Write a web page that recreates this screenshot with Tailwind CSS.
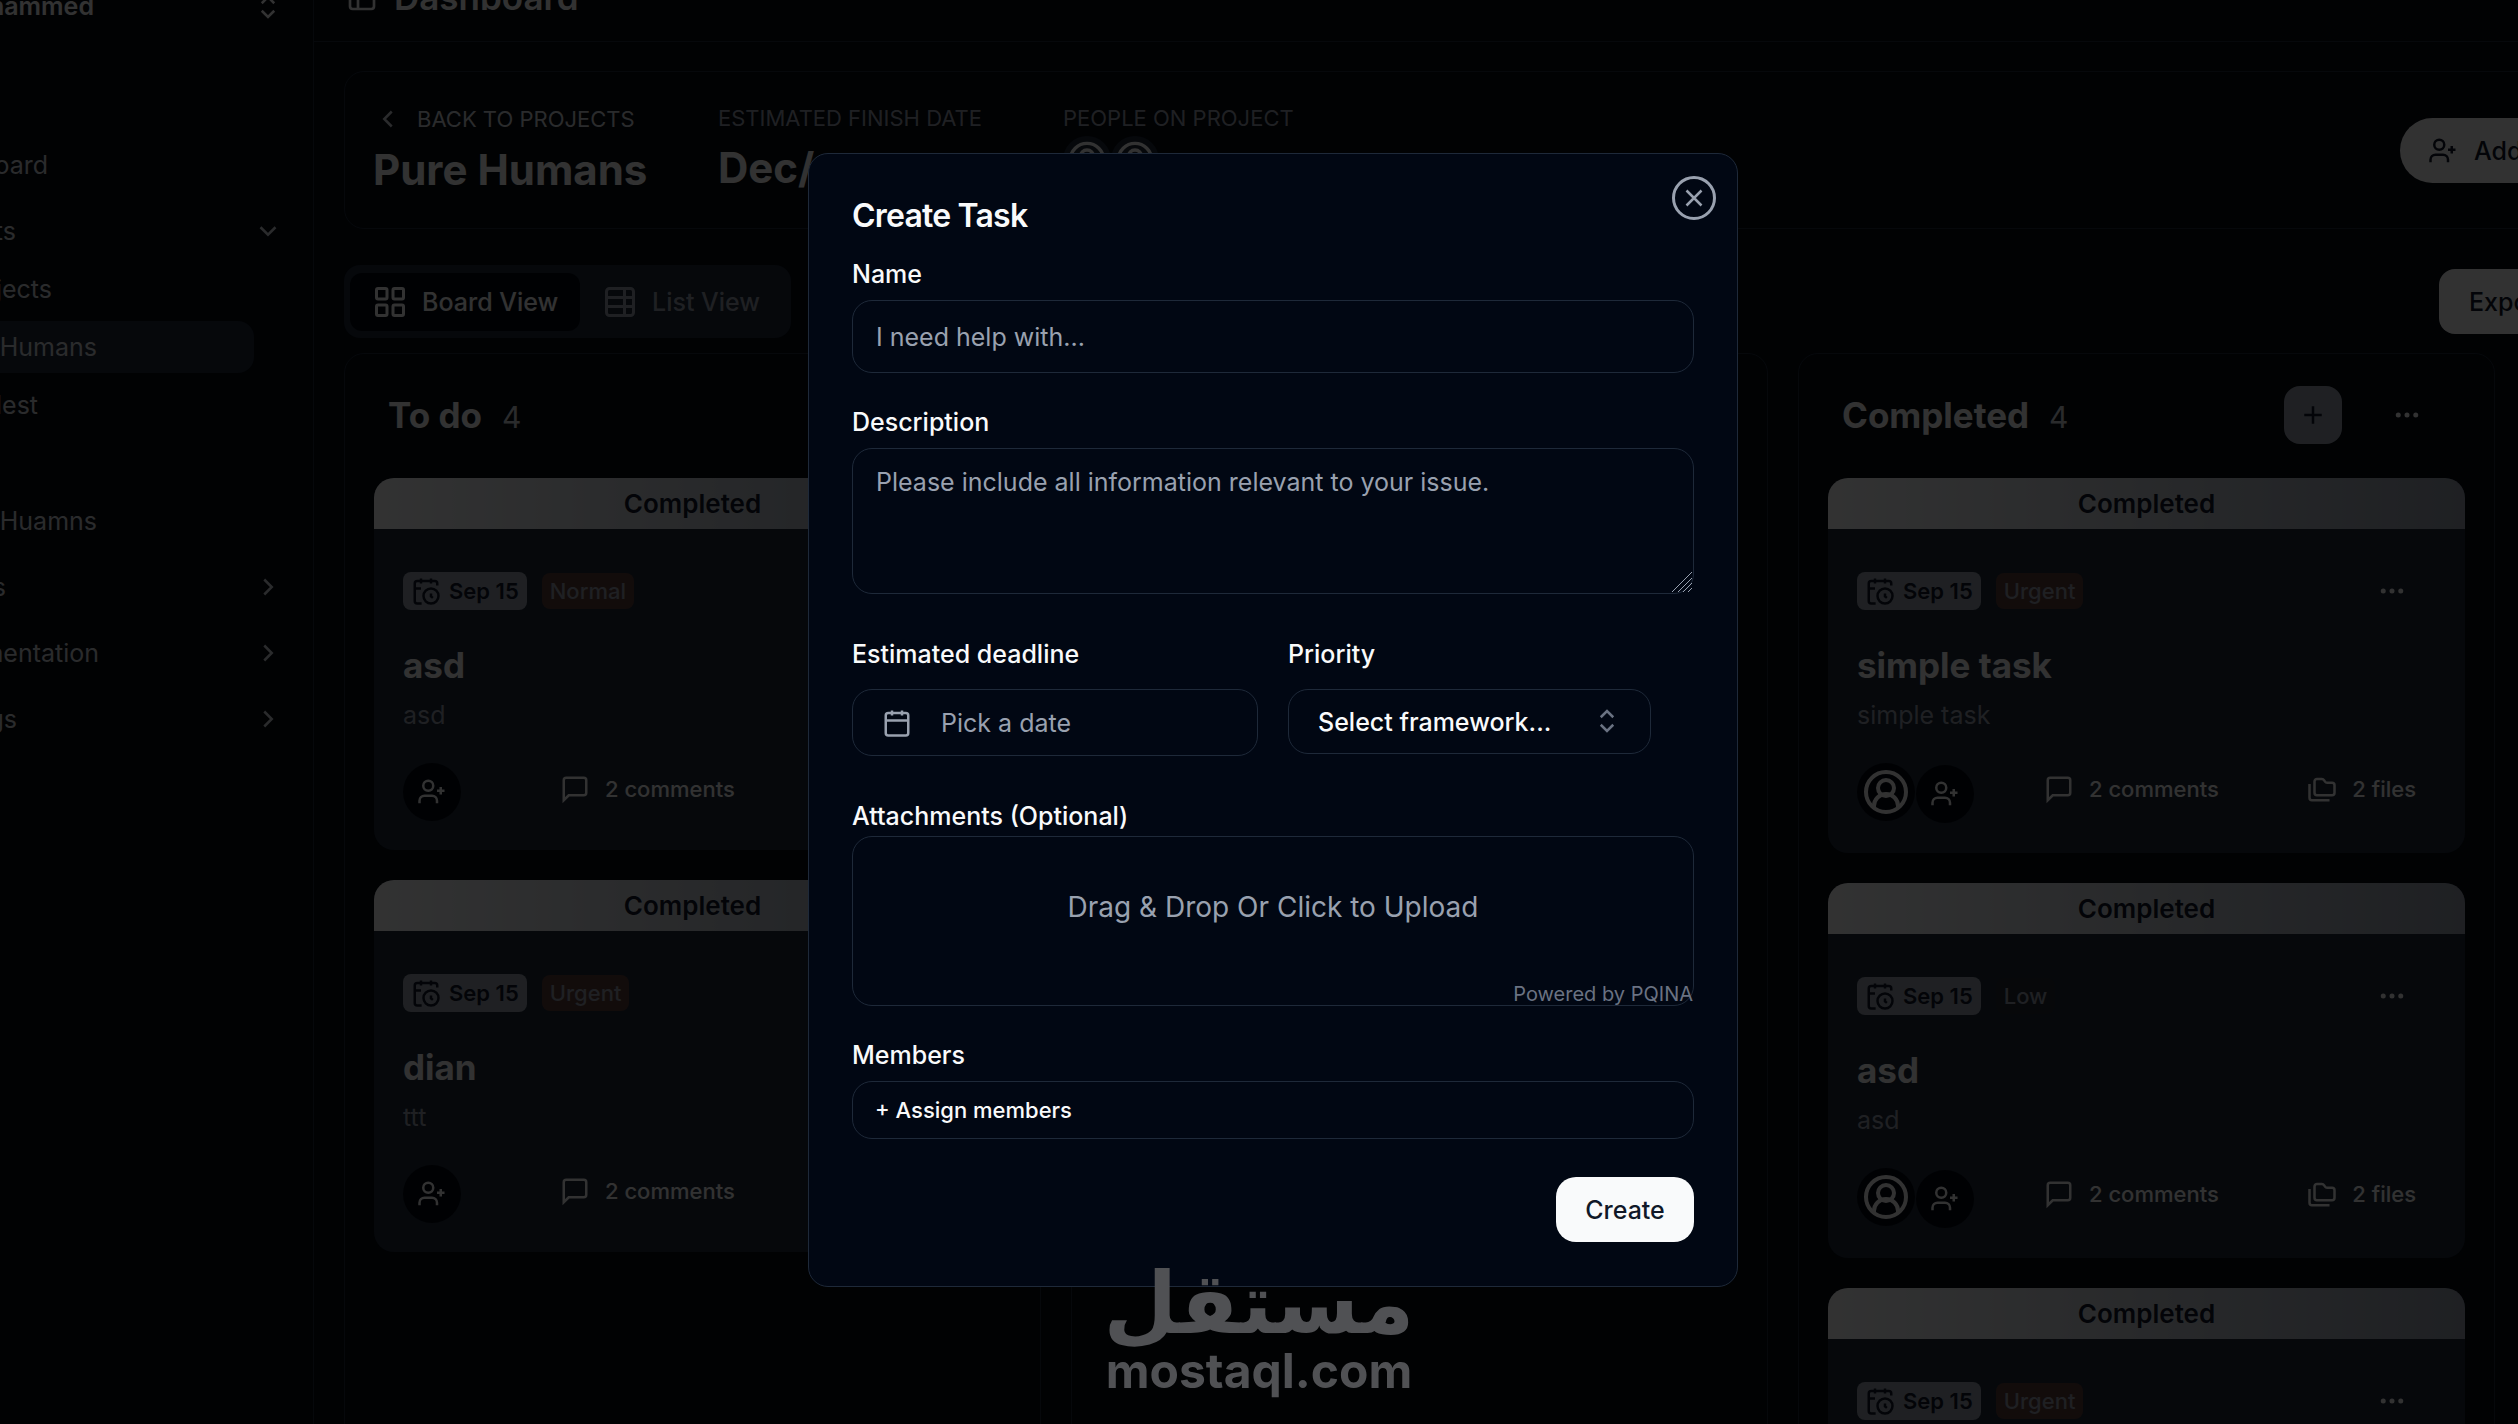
<!DOCTYPE html>
<html lang="en">

<head>
    <meta charset="UTF-8">
    <meta name="viewport" content="width=device-width, initial-scale=1.0">
    <title>Pure Humans - Dashboard</title>
    <script src="https://cdn.jsdelivr.net/npm/@tailwindcss/browser@4"></script>
</head>

<body class="h-screen overflow-hidden bg-[#050a12] font-[Inter,sans-serif] text-[25px] leading-8 text-gray-50">
    <!-- Icon sprite -->
    <svg class="hidden" xmlns="http://www.w3.org/2000/svg">
        <symbol id="user-plus" viewBox="0 0 24 24"><path d="M16 21v-2a4 4 0 0 0-4-4H6a4 4 0 0 0-4 4v2" /><circle cx="9" cy="7" r="4" /><path d="M19 8v6M22 11h-6" /></symbol>
        <symbol id="user" viewBox="0 0 24 24"><circle cx="12" cy="12" r="10" /><circle cx="12" cy="10" r="4" /><path d="M6 20v-1a6 6 0 0 1 12 0v1" /></symbol>
        <symbol id="message" viewBox="0 0 24 24"><path d="M21 15a2 2 0 0 1-2 2H7l-4 4V5a2 2 0 0 1 2-2h14a2 2 0 0 1 2 2z" /></symbol>
        <symbol id="folders" viewBox="0 0 24 24"><path d="M20 17a2 2 0 0 0 2-2V9a2 2 0 0 0-2-2h-3.900a2 2 0 0 1-1.690-.9l-.81-1.200a2 2 0 0 0-1.670-.9H8a2 2 0 0 0-2 2v9a2 2 0 0 0 2 2Z" /><path d="M2 8v11a2 2 0 0 0 2 2h14" /></symbol>
        <symbol id="calendar-clock" viewBox="0 0 24 24"><path d="M21 7.500V6a2 2 0 0 0-2-2H5a2 2 0 0 0-2 2v14a2 2 0 0 0 2 2h3.500M16 2v4M8 2v4M3 10h5M17.500 17.500 16 16.300V14" /><circle cx="16" cy="16" r="6" /></symbol>
        <symbol id="calendar" viewBox="0 0 24 24"><rect x="3" y="4" width="18" height="18" rx="2" /><path d="M16 2v4M8 2v4M3 10h18" /></symbol>
        <symbol id="dots" viewBox="0 0 24 24"><circle cx="5" cy="12" r="1" /><circle cx="12" cy="12" r="1" /><circle cx="19" cy="12" r="1" /></symbol>
        <symbol id="chevron-right" viewBox="0 0 24 24"><path d="m9 18 6-6-6-6" /></symbol>
        <symbol id="chevron-left" viewBox="0 0 24 24"><path d="m15 18-6-6 6-6" /></symbol>
        <symbol id="chevron-down" viewBox="0 0 24 24"><path d="m6 9 6 6 6-6" /></symbol>
        <symbol id="chevrons" viewBox="0 0 24 24"><path d="m7 15 5 5 5-5M7 9l5-5 5 5" /></symbol>
        <symbol id="grid" viewBox="0 0 24 24"><rect x="3" y="3" width="7" height="7" rx="1" /><rect x="14" y="3" width="7" height="7" rx="1" /><rect x="14" y="14" width="7" height="7" rx="1" /><rect x="3" y="14" width="7" height="7" rx="1" /></symbol>
        <symbol id="table" viewBox="0 0 24 24"><rect x="3" y="3" width="18" height="18" rx="2" /><path d="M15 3v18M3 9h18M3 15h18" /></symbol>
        <symbol id="layout" viewBox="0 0 24 24"><rect x="3" y="3" width="18" height="18" rx="2" /><path d="M3 9h18M9 9v12" /></symbol>
        <symbol id="plus" viewBox="0 0 24 24"><path d="M5 12h14M12 5v14" /></symbol>
        <symbol id="x" viewBox="0 0 24 24"><path d="M18 6 6 18M6 6l12 12" /></symbol>
        <symbol id="grip" viewBox="0 0 20 20"><path d="M0 20 20 0M6 20 20 6M11 20l9-9M16 20l4-4" /></symbol>
    </svg>

    <div class="flex h-full">
        <!-- Sidebar -->
        <aside class="w-[314px] shrink-0 border-r border-gray-800">
            <div class="flex h-[22px] items-end justify-between pr-[30px]">
                <span class="flex w-[94px] justify-end font-semibold">Mohammed</span>
                <svg class="size-[30px] shrink-0 fill-none stroke-current stroke-2"><use href="#chevrons" /></svg>
            </div>
            <nav class="mt-[117px] text-gray-300">
                <a href="#" class="flex h-[52px] items-center"><span class="flex w-12 justify-end">Dashboard</span></a>
                <a href="#" class="mt-3.5 flex h-[52px] items-center justify-between pr-[30px]"><span class="flex w-4 justify-end">Projects</span><svg class="size-[30px] fill-none stroke-current stroke-2"><use href="#chevron-down" /></svg></a>
                <a href="#" class="mt-1.5 flex h-[52px] items-center"><span class="flex w-[52px] justify-end">Projects</span></a>
                <a href="#" class="mt-1.5 mr-[59px] flex h-[52px] items-center rounded-r-2xl bg-gray-800"><span class="flex w-[97px] justify-end whitespace-nowrap">Pure Humans</span></a>
                <a href="#" class="mt-1.5 flex h-[52px] items-center"><span class="flex w-[38px] justify-end">dlest</span></a>
                <a href="#" class="mt-16 flex h-[52px] items-center"><span class="flex w-[97px] justify-end whitespace-nowrap">Pure Huamns</span></a>
                <a href="#" class="mt-3.5 flex h-[52px] items-center justify-between pr-[30px]"><span class="flex w-1.5 justify-end">s</span><svg class="size-[30px] fill-none stroke-current stroke-2"><use href="#chevron-right" /></svg></a>
                <a href="#" class="mt-3.5 flex h-[52px] items-center justify-between pr-[30px]"><span class="flex w-[99px] justify-end">Documentation</span><svg class="size-[30px] fill-none stroke-current stroke-2"><use href="#chevron-right" /></svg></a>
                <a href="#" class="mt-3.5 flex h-[52px] items-center justify-between pr-[30px]"><span class="flex w-[17px] justify-end">Settings</span><svg class="size-[30px] fill-none stroke-current stroke-2"><use href="#chevron-right" /></svg></a>
            </nav>
        </aside>

        <!-- Main content, wider than the viewport -->
        <main class="-mr-[200px] min-w-0 flex-1">
            <header class="flex h-[42px] items-end gap-4 border-b border-gray-800 pb-6 pl-8">
                <svg class="mb-1 size-8 shrink-0 fill-none stroke-current stroke-2"><use href="#layout" /></svg>
                <h1 class="text-[35px] leading-10 font-semibold">Dashboard</h1>
            </header>

            <div class="pl-[30px] pt-[29px]">
                <section class="flex h-[158px] items-start justify-between rounded-[20px] border border-gray-800 px-7 pt-8">
                    <div class="flex">
                        <div class="w-[345px]">
                            <a href="#" class="flex items-center gap-3.5 text-[22px] leading-7 text-gray-300"><svg class="size-[30px] fill-none stroke-current stroke-2"><use href="#chevron-left" /></svg>BACK TO PROJECTS</a>
                            <h2 class="mt-3 text-[42px] leading-12 font-bold">Pure Humans</h2>
                        </div>
                        <div class="w-[345px]">
                            <p class="text-[22px] leading-7 text-gray-400">ESTIMATED FINISH DATE</p>
                            <p class="mt-3 text-[42px] leading-12 font-bold">Dec/</p>
                        </div>
                        <div>
                            <p class="text-[22px] leading-7 text-gray-400">PEOPLE ON PROJECT</p>
                            <div class="mt-1 flex">
                                <span class="flex size-12 items-center justify-center rounded-full bg-gray-800"><svg class="size-10 fill-none stroke-current stroke-2"><use href="#user" /></svg></span>
                                <span class="flex size-12 items-center justify-center rounded-full bg-gray-800"><svg class="size-10 fill-none stroke-current stroke-2"><use href="#user" /></svg></span>
                            </div>
                        </div>
                    </div>
                    <button class="mt-3.5 mr-[51px] flex h-[65px] w-[238px] items-center gap-4 rounded-full bg-gray-50 px-7 font-medium text-gray-900"><svg class="size-[30px] fill-none stroke-current stroke-2"><use href="#user-plus" /></svg>Add users</button>
                </section>

                <div class="mt-9 flex items-center justify-between">
                    <div class="flex h-[73px] w-[447px] items-center rounded-2xl bg-gray-800 p-1.5 font-medium">
                        <button class="flex h-[58px] w-[230px] items-center gap-3.5 rounded-xl bg-gray-950 px-[22px] whitespace-nowrap"><svg class="size-9 shrink-0 fill-none stroke-current stroke-2"><use href="#grid" /></svg>Board View</button>
                        <button class="flex h-[58px] items-center gap-3.5 px-[22px] whitespace-nowrap text-gray-400"><svg class="size-9 shrink-0 fill-none stroke-current stroke-2"><use href="#table" /></svg>List View</button>
                    </div>
                    <button class="h-[65px] w-[279px] rounded-2xl bg-gray-50 pl-[30px] text-left font-medium text-gray-900">Export</button>
                </div>

                <!-- Board -->
                <div class="mt-[15px] flex gap-[30px]">
                    <section class="h-[1200px] w-[697px] shrink-0 rounded-[20px] border border-gray-800 px-[29px] pt-8">
                        <div class="flex h-[58px] items-center gap-5 px-3.5">
                            <h3 class="text-[35px] leading-10 font-bold">To do</h3>
                            <span class="pt-1 text-[30px] text-gray-300">4</span>
                        </div>
                        <div class="mt-[34px] flex flex-col gap-[30px]">
                            <article class="h-[372px] overflow-hidden rounded-[20px] bg-gray-800">
                                <p class="flex h-[51px] items-center justify-center bg-linear-to-r from-gray-50 to-gray-400 text-[26px] font-semibold text-gray-900">Completed</p>
                                <div class="px-[29px] pt-[43px]">
                                    <div class="flex h-[38px] items-center gap-[15px] text-[22px] leading-7">
                                        <span class="flex h-[38px] items-center gap-2 rounded-lg bg-gray-400 px-2 font-semibold text-gray-900"><svg class="size-[30px] fill-none stroke-current stroke-2"><use href="#calendar-clock" /></svg>Sep 15</span>
                                        <span class="rounded-lg bg-[#5c3d3a] px-2 py-1 font-medium text-gray-400">Normal</span>
                                    </div>
                                    <h4 class="mt-[35px] text-[35px] leading-10 font-bold">asd</h4>
                                    <p class="mt-3.5 text-gray-400">asd</p>
                                    <div class="mt-8 flex items-start">
                                        <button aria-label="Assign" class="flex size-[58px] items-center justify-center rounded-full bg-gray-950"><svg class="size-[30px] fill-none stroke-current stroke-2"><use href="#user-plus" /></svg></button>
                                        <span class="ml-[99px] mt-2.5 flex items-center gap-[15px] text-[22px] font-medium"><svg class="size-[30px] fill-none stroke-current stroke-2"><use href="#message" /></svg>2 comments</span>
                                    </div>
                                </div>
                            </article>
                            <article class="h-[372px] overflow-hidden rounded-[20px] bg-gray-800">
                                <p class="flex h-[51px] items-center justify-center bg-linear-to-r from-gray-50 to-gray-400 text-[26px] font-semibold text-gray-900">Completed</p>
                                <div class="px-[29px] pt-[43px]">
                                    <div class="flex h-[38px] items-center gap-[15px] text-[22px] leading-7">
                                        <span class="flex h-[38px] items-center gap-2 rounded-lg bg-gray-400 px-2 font-semibold text-gray-900"><svg class="size-[30px] fill-none stroke-current stroke-2"><use href="#calendar-clock" /></svg>Sep 15</span>
                                        <span class="rounded-lg bg-[#5c3d3a] px-2 py-1 font-medium text-gray-400">Urgent</span>
                                    </div>
                                    <h4 class="mt-[35px] text-[35px] leading-10 font-bold">dian</h4>
                                    <p class="mt-3.5 text-gray-400">ttt</p>
                                    <div class="mt-8 flex items-start">
                                        <button aria-label="Assign" class="flex size-[58px] items-center justify-center rounded-full bg-gray-950"><svg class="size-[30px] fill-none stroke-current stroke-2"><use href="#user-plus" /></svg></button>
                                        <span class="ml-[99px] mt-2.5 flex items-center gap-[15px] text-[22px] font-medium"><svg class="size-[30px] fill-none stroke-current stroke-2"><use href="#message" /></svg>2 comments</span>
                                    </div>
                                </div>
                            </article>
                        </div>
                    </section>

                    <section class="h-[1200px] w-[697px] shrink-0 rounded-[20px] border border-gray-800"></section>

                    <section class="h-[1200px] w-[697px] shrink-0 rounded-[20px] border border-gray-800 px-[29px] pt-8">
                        <div class="flex h-[58px] items-center gap-5 px-3.5">
                            <h3 class="text-[35px] leading-10 font-bold">Completed</h3>
                            <span class="pt-1 text-[30px] text-gray-300">4</span>
                            <button aria-label="Add task" class="ml-auto flex size-[58px] items-center justify-center rounded-2xl bg-gray-400 text-gray-900"><svg class="size-[30px] fill-none stroke-current stroke-2"><use href="#plus" /></svg></button>
                            <button aria-label="Column menu" class="ml-[30px] mr-[29px]"><svg class="size-[30px] fill-none stroke-current stroke-2"><use href="#dots" /></svg></button>
                        </div>
                        <div class="mt-[34px] flex flex-col gap-[30px]">
                            <article class="h-[375px] overflow-hidden rounded-[20px] bg-gray-800">
                                <p class="flex h-[51px] items-center justify-center bg-linear-to-r from-gray-50 to-gray-400 text-[26px] font-semibold text-gray-900">Completed</p>
                                <div class="px-[29px] pt-[43px]">
                                    <div class="flex h-[38px] items-center gap-[15px] text-[22px] leading-7">
                                        <span class="flex h-[38px] items-center gap-2 rounded-lg bg-gray-400 px-2 font-semibold text-gray-900"><svg class="size-[30px] fill-none stroke-current stroke-2"><use href="#calendar-clock" /></svg>Sep 15</span>
                                        <span class="rounded-lg bg-[#5c3d3a] px-2 py-1 font-medium text-gray-400">Urgent</span>
                                        <button aria-label="Task menu" class="ml-auto mr-[29px]"><svg class="size-[30px] fill-none stroke-current stroke-2"><use href="#dots" /></svg></button>
                                    </div>
                                    <h4 class="mt-[35px] text-[35px] leading-10 font-bold">simple task</h4>
                                    <p class="mt-3.5 text-gray-400">simple task</p>
                                    <div class="mt-8 flex items-start">
                                        <span class="flex size-[58px] items-center justify-center rounded-full bg-gray-950"><svg class="size-12 fill-none stroke-current stroke-2"><use href="#user" /></svg></span>
                                        <button aria-label="Assign" class="mt-0.5 ml-px flex size-[58px] items-center justify-center rounded-full bg-gray-950"><svg class="size-[30px] fill-none stroke-current stroke-2"><use href="#user-plus" /></svg></button>
                                        <span class="ml-[70px] mt-2.5 flex items-center gap-[15px] text-[22px] font-medium"><svg class="size-[30px] fill-none stroke-current stroke-2"><use href="#message" /></svg>2 comments</span>
                                        <span class="ml-auto mr-5 mt-2.5 flex items-center gap-[15px] text-[22px] font-medium"><svg class="size-[30px] fill-none stroke-current stroke-2"><use href="#folders" /></svg>2 files</span>
                                    </div>
                                </div>
                            </article>
                            <article class="h-[375px] overflow-hidden rounded-[20px] bg-gray-800">
                                <p class="flex h-[51px] items-center justify-center bg-linear-to-r from-gray-50 to-gray-400 text-[26px] font-semibold text-gray-900">Completed</p>
                                <div class="px-[29px] pt-[43px]">
                                    <div class="flex h-[38px] items-center gap-[15px] text-[22px] leading-7">
                                        <span class="flex h-[38px] items-center gap-2 rounded-lg bg-gray-400 px-2 font-semibold text-gray-900"><svg class="size-[30px] fill-none stroke-current stroke-2"><use href="#calendar-clock" /></svg>Sep 15</span>
                                        <span class="rounded-lg bg-[#262b35] px-2 py-1 font-medium text-gray-400">Low</span>
                                        <button aria-label="Task menu" class="ml-auto mr-[29px]"><svg class="size-[30px] fill-none stroke-current stroke-2"><use href="#dots" /></svg></button>
                                    </div>
                                    <h4 class="mt-[35px] text-[35px] leading-10 font-bold">asd</h4>
                                    <p class="mt-3.5 text-gray-400">asd</p>
                                    <div class="mt-8 flex items-start">
                                        <span class="flex size-[58px] items-center justify-center rounded-full bg-gray-950"><svg class="size-12 fill-none stroke-current stroke-2"><use href="#user" /></svg></span>
                                        <button aria-label="Assign" class="mt-0.5 ml-px flex size-[58px] items-center justify-center rounded-full bg-gray-950"><svg class="size-[30px] fill-none stroke-current stroke-2"><use href="#user-plus" /></svg></button>
                                        <span class="ml-[70px] mt-2.5 flex items-center gap-[15px] text-[22px] font-medium"><svg class="size-[30px] fill-none stroke-current stroke-2"><use href="#message" /></svg>2 comments</span>
                                        <span class="ml-auto mr-5 mt-2.5 flex items-center gap-[15px] text-[22px] font-medium"><svg class="size-[30px] fill-none stroke-current stroke-2"><use href="#folders" /></svg>2 files</span>
                                    </div>
                                </div>
                            </article>
                            <article class="h-[375px] overflow-hidden rounded-[20px] bg-gray-800">
                                <p class="flex h-[51px] items-center justify-center bg-linear-to-r from-gray-50 to-gray-400 text-[26px] font-semibold text-gray-900">Completed</p>
                                <div class="px-[29px] pt-[43px]">
                                    <div class="flex h-[38px] items-center gap-[15px] text-[22px] leading-7">
                                        <span class="flex h-[38px] items-center gap-2 rounded-lg bg-gray-400 px-2 font-semibold text-gray-900"><svg class="size-[30px] fill-none stroke-current stroke-2"><use href="#calendar-clock" /></svg>Sep 15</span>
                                        <span class="rounded-lg bg-[#5c3d3a] px-2 py-1 font-medium text-gray-400">Urgent</span>
                                        <button aria-label="Task menu" class="ml-auto mr-[29px]"><svg class="size-[30px] fill-none stroke-current stroke-2"><use href="#dots" /></svg></button>
                                    </div>
                                </div>
                            </article>
                        </div>
                    </section>
                </div>
            </div>
        </main>
    </div>

    <!-- Create task dialog -->
    <div class="fixed inset-0 flex items-start justify-center bg-black/80 pt-[153px] pl-7">
        <form role="dialog" aria-labelledby="dialog-title" class="relative w-[930px] rounded-[20px] border border-gray-800 bg-[#010713] px-[43px] pt-10 pb-11 font-medium">
            <button type="button" aria-label="Close" class="absolute top-[22px] right-[21px] flex size-[44px] items-center justify-center rounded-full border-3 border-gray-400 text-gray-400"><svg class="size-[30px] fill-none stroke-current stroke-2"><use href="#x" /></svg></button>
            <h2 id="dialog-title" class="text-[32px] leading-11 font-semibold tracking-tight">Create Task</h2>

            <label for="name" class="mt-5 block">Name</label>
            <input id="name" type="text" placeholder="I need help with..." class="mt-[10px] block h-[73px] w-full rounded-[20px] border border-gray-800 px-[23px] font-normal placeholder:text-gray-400">

            <label for="description" class="mt-[33px] block">Description</label>
            <div class="relative mt-[10px]">
                <textarea id="description" placeholder="Please include all information relevant to your issue." class="block h-[146px] w-full resize-none rounded-[20px] border border-gray-800 px-[23px] py-[17px] font-normal placeholder:text-gray-400"></textarea>
                <svg class="pointer-events-none absolute right-0.5 bottom-0.5 size-5 fill-none stroke-gray-400 stroke-1"><use href="#grip" /></svg>
            </div>

            <div class="mt-11 flex items-start gap-[30px]">
                <div class="w-[406px]">
                    <label for="deadline" class="block">Estimated deadline</label>
                    <button id="deadline" type="button" class="mt-[19px] flex h-[67px] w-full items-center gap-[29px] rounded-[20px] border border-gray-800 px-[29px] font-normal text-gray-400"><svg class="size-[30px] fill-none stroke-current stroke-2"><use href="#calendar" /></svg>Pick a date</button>
                </div>
                <div class="relative w-[363px]">
                    <label for="priority" class="block">Priority</label>
                    <select id="priority" class="mt-[19px] block h-[65px] w-full appearance-none rounded-[20px] border border-gray-800 px-[29px]">
                        <option>Select framework...</option>
                    </select>
                    <svg class="pointer-events-none absolute right-[29px] bottom-[18px] size-[30px] fill-none stroke-gray-500 stroke-2"><use href="#chevrons" /></svg>
                </div>
            </div>

            <label for="files" class="mt-11 block">Attachments (Optional)</label>
            <div class="relative mt-1 h-[170px] rounded-[20px] border border-gray-800 font-normal text-gray-400">
                <label for="files" class="block pt-[50px] text-center text-[28px] leading-10">Drag &amp; Drop Or Click to Upload</label>
                <input id="files" type="file" class="sr-only">
                <a href="#" class="absolute right-0 bottom-0 text-[20px] leading-[22px] text-gray-500">Powered by PQINA</a>
            </div>

            <label for="members" class="mt-[33px] block">Members</label>
            <button id="members" type="button" class="mt-[10px] block h-[58px] w-full rounded-[20px] border border-gray-800 px-[22px] text-left text-[22px]">+ Assign members</button>

            <div class="mt-[38px] flex justify-end">
                <button type="submit" class="h-[65px] w-[138px] rounded-[20px] bg-gray-50 text-gray-900">Create</button>
            </div>
        </form>
    </div>

    <!-- Watermark -->
    <div class="pointer-events-none fixed inset-x-0 bottom-7 flex flex-col items-center font-bold text-[#505154]">
        <p lang="ar" dir="rtl" class="font-['DejaVu_Sans',sans-serif] text-[85px] leading-[84px]">مستقل</p>
        <p class="text-[48px] leading-[50px]">mostaql.com</p>
    </div>
</body>

</html>
